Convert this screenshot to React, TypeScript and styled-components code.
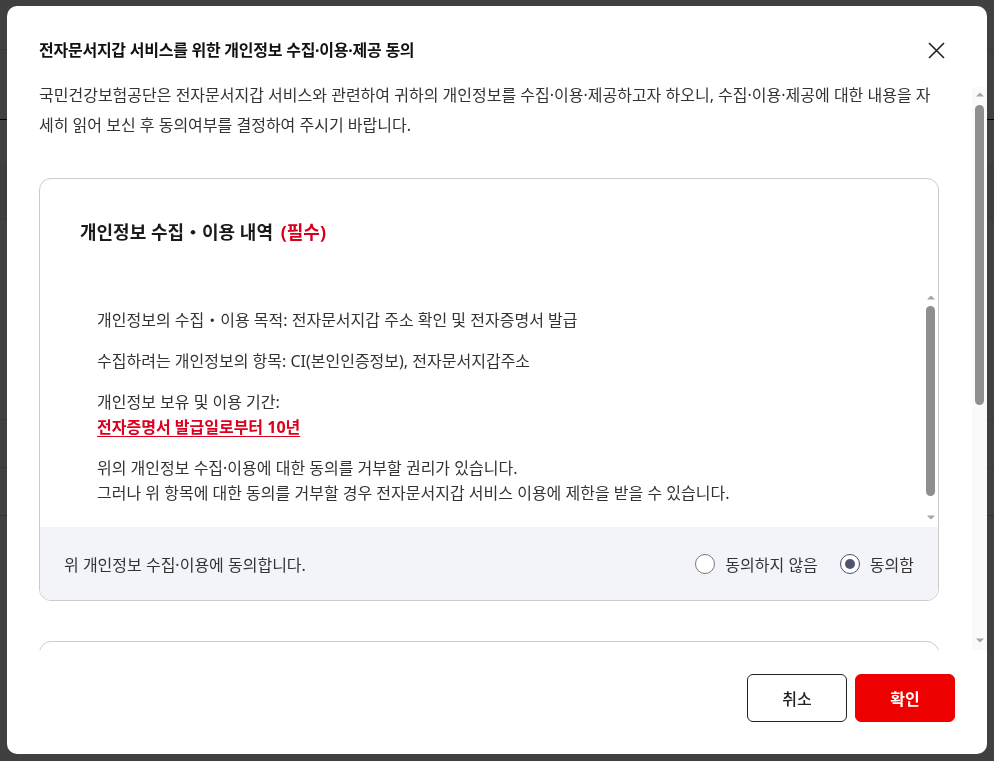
import styled, { createGlobalStyle, css } from "styled-components";
import { useState, type ReactNode } from "react";

const GlobalStyle = createGlobalStyle`
  * { box-sizing: border-box; }
  html, body { margin: 0; padding: 0; height: 100%; overflow: hidden; }
  body {
    font-family: "Noto Sans", "Noto Sans CJK KR", sans-serif;
    color: #222;
    background: #fff;
  }
  p { margin: 0; }
`;

const hideNativeBar = css`
  scrollbar-width: none;
  &::-webkit-scrollbar { display: none; }
`;

/* ---------- page behind the modal ---------- */

const Page = styled.div`
  height: 100vh;
  display: flex;
  flex-direction: column;
`;

const PageBar = styled.div<{ $h: number; $line?: string; $bg?: string }>`
  height: ${(p) => p.$h}px;
  border-bottom: 1px solid ${(p) => p.$line ?? "#e3e3e3"};
  background: ${(p) => p.$bg ?? "#fff"};
`;

/* ---------- scroll rail (drawn, the headless page hides native bars) ---------- */

const Rail = styled.div<{ $track: string; $top?: number }>`
  width: 15px;
  flex: none;
  display: flex;
  flex-direction: column;
  align-items: center;
  background: ${(p) => p.$track};
  margin-top: ${(p) => p.$top ?? 0}px;
  padding-bottom: 3px;
`;

const RailArrow = styled.div`
  height: 14px;
  width: 100%;
  display: flex;
  align-items: center;
  justify-content: center;
  flex: none;
`;

const RailThumb = styled.div<{ $gap: number; $size: number }>`
  width: 9px;
  height: ${(p) => p.$size}px;
  margin-top: ${(p) => p.$gap}px;
  border-radius: 5px;
  background: #8f8f8f;
  flex: none;
`;

const RailSpacer = styled.div`
  flex: 1;
`;

function ScrollRail({ track, top, gap, size }: { track: string; top?: number; gap: number; size: number }) {
  return (
    <Rail $track={track} $top={top} aria-hidden="true">
      <RailArrow>
        <svg width="8" height="5" viewBox="0 0 8 5">
          <polygon points="4,0.5 8,4.5 0,4.5" fill="#a3a3a3" />
        </svg>
      </RailArrow>
      <RailThumb $gap={gap} $size={size} />
      <RailSpacer />
      <RailArrow>
        <svg width="8" height="5" viewBox="0 0 8 5">
          <polygon points="0,0.5 8,0.5 4,4.5" fill="#a3a3a3" />
        </svg>
      </RailArrow>
    </Rail>
  );
}

/* ---------- modal ---------- */

const Overlay = styled.div`
  position: fixed;
  inset: 0;
  background: rgba(0, 0, 0, 0.75);
  display: flex;
  align-items: flex-start;
  justify-content: center;
  padding-top: 6px;
`;

const Dialog = styled.section`
  width: 980px;
  height: 748px;
  background: #fff;
  border-radius: 10px;
  display: flex;
  flex-direction: column;
  overflow: hidden;
`;

const Header = styled.header`
  display: flex;
  align-items: center;
  justify-content: space-between;
  padding: 32px 42px 18px 32px;
`;

const Title = styled.h2`
  margin: 0;
  font-size: 16px;
  letter-spacing: -0.25px;
  line-height: 24px;
  font-weight: 700;
  color: #111;
`;

const CloseButton = styled.button`
  border: 0;
  padding: 0;
  background: none;
  width: 17px;
  height: 17px;
  display: flex;
  cursor: pointer;
`;

const Body = styled.div`
  flex: 1;
  min-height: 0;
  display: flex;
`;

const BodyScroll = styled.div`
  flex: 1;
  overflow-y: auto;
  padding: 0 33px 0 32px;
  ${hideNativeBar}
`;

const Intro = styled.p`
  font-size: 16px;
  line-height: 30px;
  color: #333;
  margin-bottom: 38px !important;
`;

const Card = styled.div`
  border: 1px solid #cbcbcb;
  border-radius: 12px;
  overflow: hidden;
  margin-bottom: 40px;
`;

const CardHead = styled.h3`
  margin: 0;
  padding: 40px 40px 45px;
  font-size: 18px;
  line-height: 26px;
  font-weight: 700;
  color: #1a1a1a;
`;

const Required = styled.span`
  color: #d5001f;
  margin-left: 3px;
`;

const CardBody = styled.div`
  display: flex;
  height: 237px;
`;

const CardScroll = styled.div`
  flex: 1;
  overflow-y: auto;
  padding: 18px 24px 32px 57px;
  ${hideNativeBar}
`;

const Para = styled.p`
  font-size: 16px;
  line-height: 25px;
  color: #333;
  & + & { margin-top: 16px; }
`;

const Emph = styled.strong`
  color: #dc001e;
  font-weight: 700;
  text-decoration: underline;
  text-underline-offset: 3px;
`;

const AgreeBar = styled.div`
  height: 73px;
  background: #f3f4f9;
  display: flex;
  align-items: center;
  justify-content: space-between;
  padding: 0 24px 0 24px;
  font-size: 16px;
  color: #333;
`;

const Radios = styled.div`
  display: flex;
  gap: 22px;
`;

const RadioLabel = styled.label`
  display: flex;
  align-items: center;
  gap: 10px;
  cursor: pointer;
  color: #333;
`;

const RadioDot = styled.span<{ $on: boolean }>`
  width: 20px;
  height: 20px;
  border-radius: 50%;
  background: #fff;
  border: ${(p) => (p.$on ? "1.5px solid #4b5069" : "1px solid #7a7a7a")};
  display: flex;
  align-items: center;
  justify-content: center;
  &::after {
    content: "";
    width: 10px;
    height: 10px;
    border-radius: 50%;
    background: ${(p) => (p.$on ? "#50556f" : "transparent")};
  }
`;

const HiddenInput = styled.input`
  display: none;
`;

const Footer = styled.footer`
  display: flex;
  justify-content: flex-end;
  gap: 8px;
  padding: 24px 32px 32px;
`;

const Button = styled.button<{ $primary?: boolean }>`
  width: 100px;
  height: 48px;
  border-radius: 6px;
  font-family: inherit;
  font-size: 16px;
  cursor: pointer;
  ${(p) =>
    p.$primary
      ? css`
          background: #ee0000;
          border: 1px solid #ee0000;
          color: #fff;
          font-weight: 700;
        `
      : css`
          background: #fff;
          border: 1px solid #222;
          color: #222;
          font-weight: 500;
        `}
`;

type Section = {
  title: string;
  subject: string;
  paras: ReactNode[];
};

const sections: Section[] = [
  {
    title: "개인정보 수집・이용 내역",
    subject: "개인정보 수집·이용",
    paras: [
      "개인정보의 수집・이용 목적: 전자문서지갑 주소 확인 및 전자증명서 발급",
      "수집하려는 개인정보의 항목: CI(본인인증정보), 전자문서지갑주소",
      <>
        개인정보 보유 및 이용 기간:
        <br />
        <Emph>전자증명서 발급일로부터 10년</Emph>
      </>,
      <>
        위의 개인정보 수집·이용에 대한 동의를 거부할 권리가 있습니다.
        <br />
        그러나 위 항목에 대한 동의를 거부할 경우 전자문서지갑 서비스 이용에 제한을 받을 수 있습니다.
      </>,
    ],
  },
  {
    title: "개인정보 제3자 제공 내역",
    subject: "개인정보 제3자 제공",
    paras: [
      "개인정보를 제공받는 자: 행정안전부(전자문서지갑 운영기관)",
      "개인정보를 제공받는 자의 이용 목적: 전자증명서 발급 및 전자문서지갑 전송",
      <>
        제공하는 개인정보의 보유 및 이용 기간:
        <br />
        <Emph>전자증명서 발급일로부터 10년</Emph>
      </>,
      <>
        위의 개인정보 제3자 제공에 대한 동의를 거부할 권리가 있습니다.
        <br />
        그러나 위 항목에 대한 동의를 거부할 경우 전자문서지갑 서비스 이용에 제한을 받을 수 있습니다.
      </>,
    ],
  },
];

function ConsentCard({ section, idx }: { section: Section; idx: number }) {
  const [agree, setAgree] = useState<boolean | null>(idx === 0 ? true : null);
  const name = `consent-${idx}`;
  return (
    <Card>
      <CardHead>
        {section.title} <Required>(필수)</Required>
      </CardHead>
      <CardBody>
        <CardScroll>
          {section.paras.map((p, i) => (
            <Para key={i}>{p}</Para>
          ))}
        </CardScroll>
        <ScrollRail track="#fff" gap={2} size={190} />
      </CardBody>
      <AgreeBar>
        <span>위 {section.subject}에 동의합니다.</span>
        <Radios>
          <RadioLabel>
            <HiddenInput type="radio" name={name} checked={agree === false} onChange={() => setAgree(false)} />
            <RadioDot $on={agree === false} />
            동의하지 않음
          </RadioLabel>
          <RadioLabel>
            <HiddenInput type="radio" name={name} checked={agree === true} onChange={() => setAgree(true)} />
            <RadioDot $on={agree === true} />
            동의함
          </RadioLabel>
        </Radios>
      </AgreeBar>
    </Card>
  );
}

export default function App() {
  return (
    <>
      <GlobalStyle />
      <Page>
        <PageBar $h={50} />
        <PageBar $h={70} $line="#111" />
        <PageBar $h={45} $line="#fff" />
        <PageBar $h={55} $bg="#eef2fa" />
        <PageBar $h={200} />
        <PageBar $h={48} />
        <PageBar $h={48} $line="#ccc" />
      </Page>
      <Overlay>
        <Dialog role="dialog" aria-modal="true">
          <Header>
            <Title>전자문서지갑 서비스를 위한 개인정보 수집·이용·제공 동의</Title>
            <CloseButton aria-label="닫기">
              <svg width="17" height="17" viewBox="0 0 17 17">
                <path d="M1 1 L16 16 M16 1 L1 16" stroke="#222" strokeWidth="1.6" fill="none" />
              </svg>
            </CloseButton>
          </Header>
          <Body>
            <BodyScroll>
              <Intro>
                국민건강보험공단은 전자문서지갑 서비스와 관련하여 귀하의 개인정보를 수집·이용·제공하고자 하오니,
                수집·이용·제공에 대한 내용을 자세히 읽어 보신 후 동의여부를 결정하여 주시기 바랍니다.
              </Intro>
              {sections.map((s, i) => (
                <ConsentCard key={i} section={s} idx={i} />
              ))}
            </BodyScroll>
            <ScrollRail track="#fafafa" top={7} gap={4} size={300} />
          </Body>
          <Footer>
            <Button>취소</Button>
            <Button $primary>확인</Button>
          </Footer>
        </Dialog>
      </Overlay>
    </>
  );
}
